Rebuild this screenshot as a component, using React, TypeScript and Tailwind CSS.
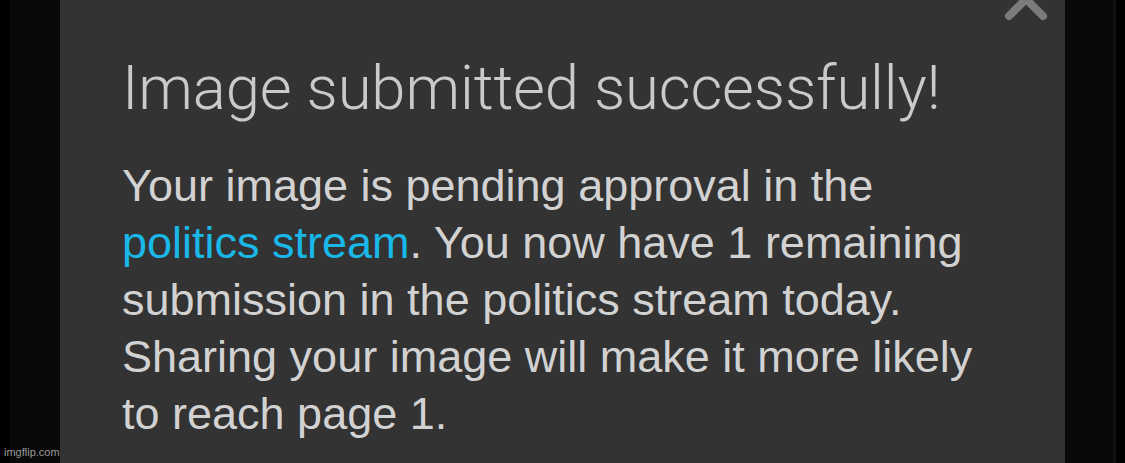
import React from "react";

const CloseMark = () => (
  <svg width="50" height="50" viewBox="0 0 50 50" className="absolute left-[941px] top-[-26px]">
    <path d="M8 8 L42 42 M42 8 L8 42" stroke="#7b7b7b" strokeWidth="8" strokeLinecap="round" fill="none" />
  </svg>
);

const App = () => {
  return (
    <div className="relative flex h-[463px] w-[1125px] overflow-hidden bg-black">
      <div className="w-[10px] bg-black" />
      <div className="w-[50px] bg-[#090909]" />
      <div className="relative w-[1005px] bg-[#333333] pl-[62px]">
        <CloseMark />
        <h1
          className="mt-[50px] text-[61.6px] leading-[76px] font-light text-[#cacaca] tracking-[-0.1px]"
          style={{ fontFamily: "Roboto, 'Liberation Sans', sans-serif" }}
        >
          Image submitted successfully!
        </h1>
        <p
          className="mt-[31px] text-[45px] leading-[57px] text-[#d2d2d2]"
          style={{ fontFamily: "'Liberation Sans', Arial, sans-serif" }}
        >
          Your image is pending approval in the
          <br />
          <span className="text-[#19b8e9]">politics stream</span>. You now have 1 remaining
          <br />
          submission in the politics stream today.
          <br />
          Sharing your image will make it more likely
          <br />
          to reach page 1.
        </p>
      </div>
      <div className="w-[48px] bg-[#090909]" />
      <div className="w-[3px] bg-[#101010]" />
      <div className="w-[9px] bg-black" />
      <span
        className="absolute bottom-[3px] left-[4px] text-[11px] text-[#9a9a9a]"
        style={{ fontFamily: "'Liberation Sans', Arial, sans-serif" }}
      >
        imgflip.com
      </span>
    </div>
  );
};

export default App;
